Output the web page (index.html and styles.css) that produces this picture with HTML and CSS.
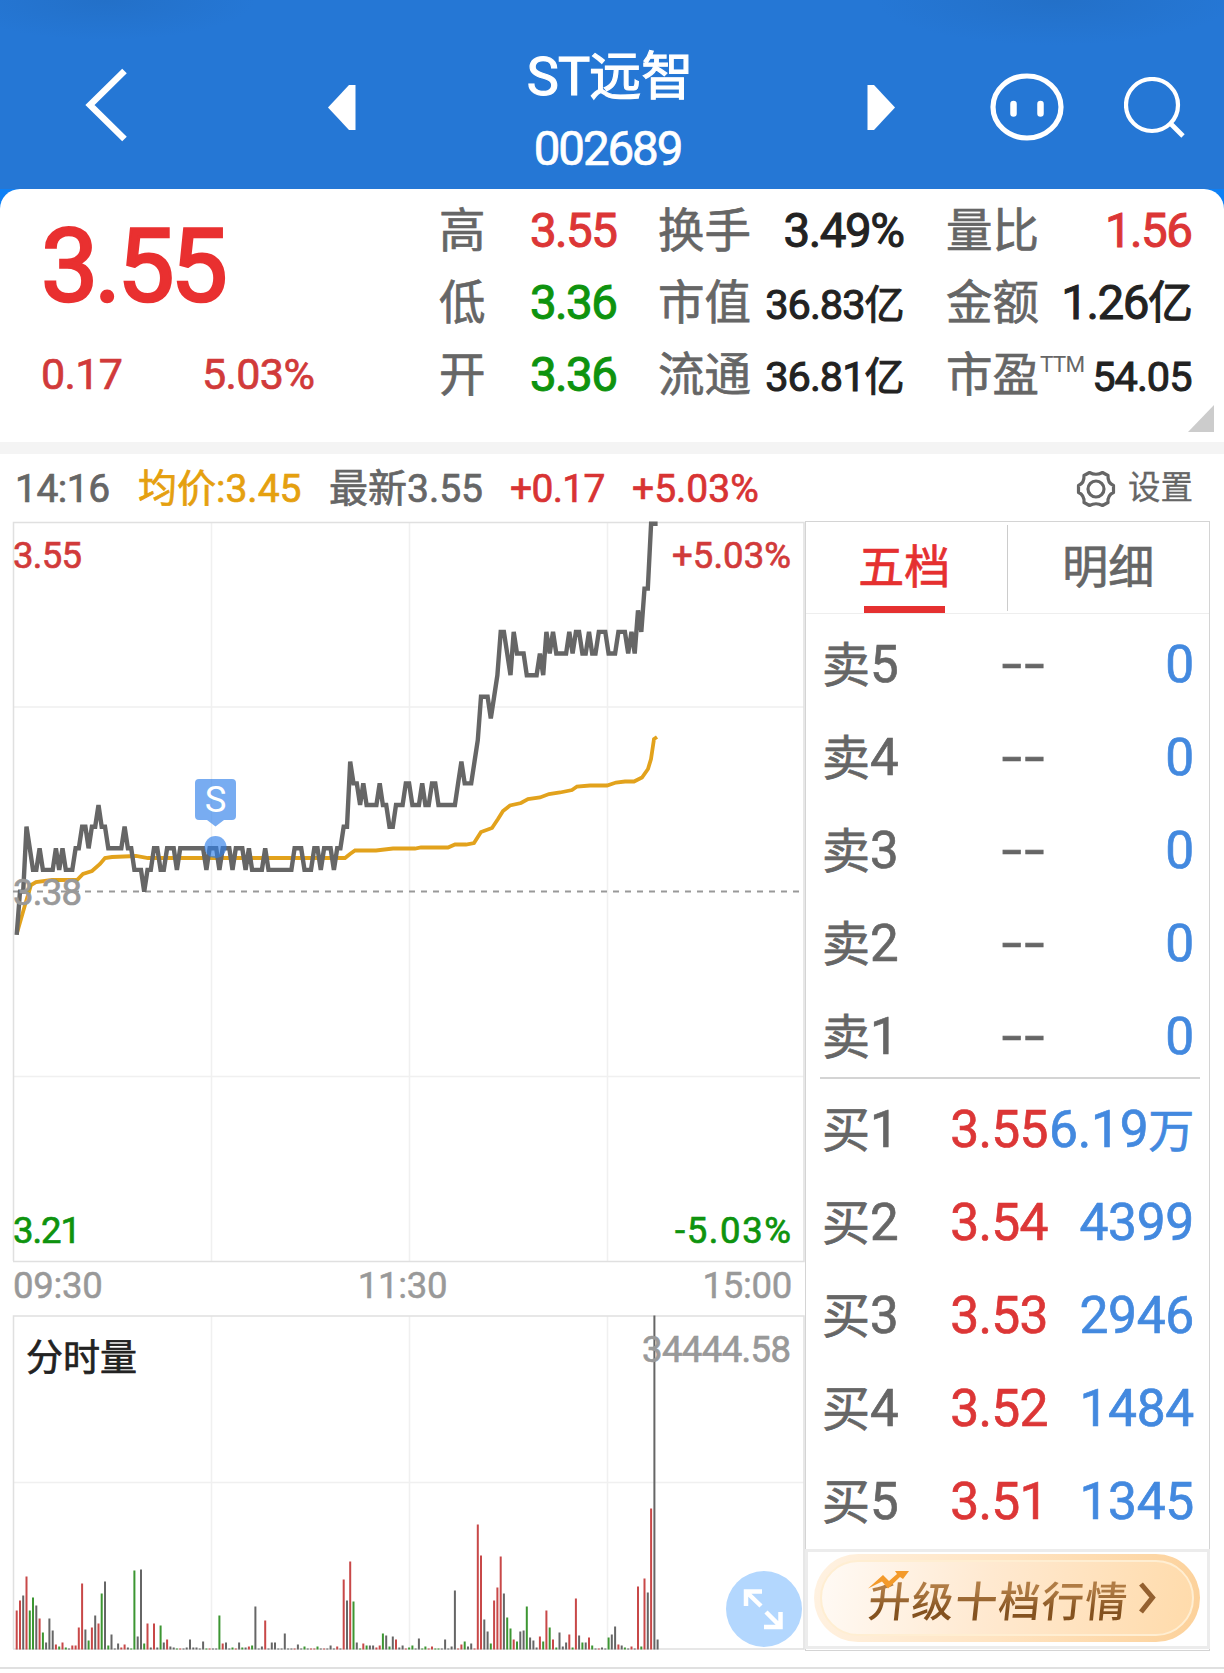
FILE: index.html
```html
<!DOCTYPE html>
<html lang="zh-CN">
<head>
    <meta charset="UTF-8">
    <meta name="viewport" content="width=device-width, initial-scale=1.0">
    <title>ST远智 002689</title>
    <link rel="stylesheet" href="styles.css">
</head>
<body>

<!-- 顶部导航 -->
<div class="header">
    <svg class="back" width="42" height="74" viewBox="0 0 42 74"><path d="M39.500 3L5 37L39.500 71" fill="none" stroke="#fff" stroke-width="6.500"/></svg>
    <svg class="prev" width="28" height="45" viewBox="0 0 28 45"><path d="M0 22.500L21 0H27.500V45H21Z" fill="#fff"/></svg>
    <div class="title">
        <div class="name"><span>ST</span>远智</div>
        <div class="code">002689</div>
    </div>
    <svg class="next" width="28" height="45" viewBox="0 0 28 45"><path d="M28 22.500L7 0H.5V45H7Z" fill="#fff"/></svg>
    <svg class="face" width="76" height="70" viewBox="0 0 76 70">
        <ellipse cx="38" cy="35" rx="34" ry="31" fill="none" stroke="#fff" stroke-width="5.200"/>
        <path d="M24.500 32V41.500M51.500 32V41.500" stroke="#fff" stroke-width="6.500" stroke-linecap="round"/>
    </svg>
    <svg class="search" width="62" height="62" viewBox="0 0 62 62">
        <ellipse cx="28" cy="28" rx="26" ry="26" fill="none" stroke="#fff" stroke-width="4.200"/>
        <path d="M46 46L59 59" stroke="#fff" stroke-width="4.800"/>
    </svg>
</div>

<!-- 行情概览 -->
<div class="card-bg">
<div class="card">
    <div class="price">
        <div class="last">3.55</div>
        <div class="change"><span>0.17</span><span>5.03%</span></div>
    </div>
    <div class="stats col-1">
        <div class="stat"><span>高</span><b class="red">3.55</b></div>
        <div class="stat"><span>低</span><b class="green">3.36</b></div>
        <div class="stat"><span>开</span><b class="green">3.36</b></div>
    </div>
    <div class="stats col-2">
        <div class="stat"><span>换手</span><b>3.49%</b></div>
        <div class="stat"><span>市值</span><b class="small">36.83<i>亿</i></b></div>
        <div class="stat"><span>流通</span><b class="small">36.81<i>亿</i></b></div>
    </div>
    <div class="stats col-3">
        <div class="stat"><span>量比</span><b class="red">1.56</b></div>
        <div class="stat"><span>金额</span><b>1.26<i>亿</i></b></div>
        <div class="stat"><span>市盈<em>TTM</em></span><b class="small">54.05</b></div>
    </div>
    <div class="corner"></div>
</div>
</div>

<div class="info">
    <span class="time">14:16</span>
    <span class="avg">均价:3.45</span>
    <span class="latest">最新3.55</span>
    <span class="up">+0.17</span>
    <span class="pct">+5.03%</span>
    <div class="settings">
        <svg width="42" height="40" viewBox="0 0 42 40">
            <path d="M14.500 3.500Q21 7 27.500 3.500L33 6.500Q32.500 14 38.500 16.500V23.500Q32.500 26 33 33.500L27.500 36.500Q21 33 14.500 36.500L9 33.500Q9.500 26 3.500 23.500V16.500Q9.500 14 9 6.500Z" fill="none" stroke="#666" stroke-width="3.200" stroke-linejoin="round"/>
            <ellipse cx="21" cy="20" rx="8" ry="8" fill="none" stroke="#666" stroke-width="3.200"/>
        </svg>
        设置
    </div>
</div>

<div class="main">
    <div class="charts">
        <!-- 分时走势 -->
        <svg class="price-chart" width="805" height="743" viewBox="0 521 805 743">
            <path class="grid" d="M211.500 523V1261M409.500 523V1261M607.500 523V1261M13 707H804M13 1076.500H804"/>
            <path class="frame" d="M13.500 1261V522.500H804V1261.500H13"/>
            <path d="M13 891.500H804" stroke="#999" stroke-width="1.800" stroke-dasharray="6 6"/>
            <polyline id="avgLine" class="avg-line" points="16.7,934 25,905 31,885 36,882 52,880 77,880 83,874 92,871 100,864 105,858 112,857 136,856 148,858 345,858 350,854 355,850.5 376,850.5 393,848.5 415,848.5 421,847.5 448,847.5 455,844.5 466,844.5 474,843 481,832 492,828 498,819 503,811 510,805.5 521,803 528,799 540,797.5 549,794 560,792.5 572,790 577,786.5 590,785.5 607,785.5 616,782.5 625,781.5 634,781.5 642,777.5 648,769 651,759 654,739 657,737"/>
            <polyline id="priceLine" class="price-line"/>
            <g class="sell-mark">
                <path d="M199 779H232Q236 779 236 783V816Q236 820 232 820H224L215.500 826.500L207 820H199Q195 820 195 816V783Q195 779 199 779Z"/>
                <circle cx="215.500" cy="847" r="11"/>
                <text x="215.500" y="811.500" text-anchor="middle">S</text>
            </g>
            <text class="red" x="13" y="568" textLength="69">3.55</text>
            <text class="red" x="791" y="568" text-anchor="end" textLength="119">+5.03%</text>
            <text class="gray" x="13" y="905" textLength="69">3.38</text>
            <text class="green" x="13" y="1243" textLength="68">3.21</text>
            <text class="green" x="791" y="1243" text-anchor="end" textLength="116">-5.03%</text>
        </svg>
        <div class="axis"><span>09:30</span><span>11:30</span><span>15:00</span></div>
        <!-- 分时量 -->
        <div class="volume">
            <svg width="805" height="336" viewBox="0 1315 805 336">
                <path class="grid" d="M211.500 1316V1649M409.500 1316V1649M607.500 1316V1649M13 1482.500H804"/>
                <path class="frame" d="M13.500 1649V1316H804V1649H13"/>
                <g id="bars"></g>
                <text class="vol-name" x="26" y="1371">分时量</text>
                <text class="gray" x="791" y="1361.500" text-anchor="end" textLength="149">34444.58</text>
            </svg>
            <div class="expand">
                <svg width="76" height="76" viewBox="0 0 76 76"><path d="M20 35V20.500H36M20 20.500L35 35M40 41L55 56M38 56H54.500V41" fill="none" stroke="#fff" stroke-width="4.500"/></svg>
            </div>
        </div>
    </div>

    <!-- 五档盘口 -->
    <div class="book">
        <div class="tabs">
            <div class="tab active">五档</div>
            <div class="tab">明细</div>
        </div>
        <div class="rows">
            <div class="row"><span>卖<i>5</i></span><b class="none">--</b><b class="vol">0</b></div>
            <div class="row"><span>卖<i>4</i></span><b class="none">--</b><b class="vol">0</b></div>
            <div class="row"><span>卖<i>3</i></span><b class="none">--</b><b class="vol">0</b></div>
            <div class="row"><span>卖<i>2</i></span><b class="none">--</b><b class="vol">0</b></div>
            <div class="row"><span>卖<i>1</i></span><b class="none">--</b><b class="vol">0</b></div>
            <div class="line"></div>
            <div class="row"><span>买<i>1</i></span><b class="red">3.55</b><b class="vol">6.19<u>万</u></b></div>
            <div class="row"><span>买<i>2</i></span><b class="red">3.54</b><b class="vol">4399</b></div>
            <div class="row"><span>买<i>3</i></span><b class="red">3.53</b><b class="vol">2946</b></div>
            <div class="row"><span>买<i>4</i></span><b class="red">3.52</b><b class="vol">1484</b></div>
            <div class="row"><span>买<i>5</i></span><b class="red">3.51</b><b class="vol">1345</b></div>
        </div>
        <div class="banner">
            <div class="pill">
                <span>升级十档行情</span>
                <svg class="chevron" width="20" height="32" viewBox="0 0 20 32"><path d="M3 2L14.500 15.500L3 30" fill="none" stroke="#94602f" stroke-width="5"/></svg>
                <svg class="trend" width="42" height="20" viewBox="0 0 42 20"><path d="M0 18.500L15 5L21 11L29 4L27 1H41L35 9L32 7L20 18.500L14 11.500Z" fill="#f39a2b"/></svg>
            </div>
        </div>
    </div>
</div>
<div class="bottom-line"></div>

<script src="chart.js"></script>
</body>
</html>
```
FILE: styles.css
```css
* {
    box-sizing: border-box;
}
body {
    margin: 0;
    background-color: #fff;
    font-family: Roboto, "Noto Sans CJK SC", sans-serif;
    font-weight: 400;
    -webkit-text-stroke: 0.7px;
    color: #222;
    overflow: hidden;
}
b, i, em, u {
    font-weight: inherit;
    font-style: normal;
    text-decoration: none;
}
svg {
    display: block;
}
.red {
    color: #dc3636;
    fill: #d13a3a;
}
.green {
    color: #0e930e;
    fill: #0e930e;
}
.gray {
    fill: #999;
}

/* 顶部 */
.header {
    height: 189px;
    display: flex;
    align-items: flex-start;
    color: #fff;
    background: radial-gradient(ellipse 150px 40px at 105px 0, #2370c8, transparent),
        radial-gradient(ellipse 180px 45px at 1055px 0, #2370c8, transparent), #2577d5;
}
.back {
    margin: 68px 0 0 85px;
}
.prev {
    margin: 85px 0 0 201px;
}
.title {
    width: 300px;
    margin: 45px 0 0 104px;
    text-align: center;
}
.name {
    font-size: 52px;
    line-height: 64px;
    height: 64px;
    -webkit-text-stroke-width: 1.1px;
}
.name span {
    font-size: 54px;
    letter-spacing: -1px;
}
.code {
    margin-top: 10px;
    font-size: 47.5px;
    line-height: 60px;
    letter-spacing: -2.1px;
    padding-right: 5px;
}
.next {
    margin: 85px 0 0 107px;
}
.face {
    margin: 72px 0 0 94px;
}
.search {
    margin: 77px 0 0 59px;
}

/* 概览卡片 */
.card-bg {
    background-color: #0e80f5;
}
.card {
    position: relative;
    display: flex;
    height: 253px;
    padding-top: 5px;
    background-color: #fff;
    border-radius: 20px 20px 0 0;
}
.price {
    width: 396px;
    padding-left: 41px;
    color: #e93030;
}
.last {
    margin-top: 14px;
    font-size: 102px;
    line-height: 116px;
    letter-spacing: -4px;
    -webkit-text-stroke-width: 2.6px;
}
.change {
    display: flex;
    gap: 80px;
    margin-top: 24px;
    font-size: 43px;
    line-height: 52px;
    letter-spacing: -0.6px;
    color: #d13a3a;
}
.change span:first-child {
    width: 81px;
}
.stats {
    display: flex;
    flex-direction: column;
}
.col-1 {
    width: 179px;
    margin-left: 43px;
}
.col-2 {
    width: 247px;
    margin-left: 40px;
}
.col-3 {
    width: 247px;
    margin-left: 41px;
}
.stat {
    display: flex;
    justify-content: space-between;
    height: 72px;
    line-height: 74px;
    font-size: 46.5px;
    white-space: nowrap;
}
.stat span {
    color: #666;
}
.stat b {
    font-size: 47.5px;
    letter-spacing: -1.5px;
    padding-right: 1.5px;
    -webkit-text-stroke-width: 1px;
}
.stat b.small {
    font-size: 41.5px;
    letter-spacing: -1px;
    padding-top: 2px;
}
.stat i {
    font-size: 45px;
}
.stat .small i {
    font-size: 40px;
}
.stat em {
    font-size: 22.5px;
    vertical-align: 19px;
    line-height: 1;
    margin-left: 1px;
    letter-spacing: -0.8px;
    -webkit-text-stroke-width: 0;
}
.corner {
    position: absolute;
    right: 10px;
    bottom: 10px;
    border-left: 26px solid transparent;
    border-bottom: 27px solid #ccc;
}

/* 分时信息栏 */
.info {
    display: flex;
    height: 79px;
    padding-top: 5px;
    border-top: 12px solid #f4f4f4;
    line-height: 61px;
    font-size: 39px;
    color: #d83333;
    white-space: nowrap;
}
.info span {
    flex: none;
}
.time {
    width: 121px;
    padding-left: 15px;
    color: #666;
    letter-spacing: -0.5px;
}
.avg {
    width: 208px;
    padding-left: 17px;
    color: #e5a00f;
}
.latest {
    width: 181px;
    color: #666;
}
.up {
    width: 122px;
    letter-spacing: -0.7px;
}
.settings {
    display: flex;
    align-items: center;
    gap: 11px;
    margin-left: auto;
    padding-right: 31px;
    height: 59px;
    font-size: 32.5px;
    color: #666;
    -webkit-text-stroke-width: 0.3px;
}

.main {
    display: flex;
}
.charts {
    width: 805px;
}
.charts text {
    font-size: 36.5px;
    stroke-width: 0.7px;
}
text.red {
    stroke: #d13a3a;
}
text.green {
    stroke: #0e930e;
}
text.gray {
    stroke: #999;
}
.grid {
    fill: none;
    stroke: #f0f0f0;
    stroke-width: 1.5;
}
.frame {
    fill: none;
    stroke: #e0e0e0;
    stroke-width: 1.5;
}
.price-line {
    fill: none;
    stroke: #666;
    stroke-width: 4.4;
}
.avg-line {
    fill: none;
    stroke: #e2a21c;
    stroke-width: 3.8;
}
.sell-mark {
    fill: #2f80ea;
    fill-opacity: 0.65;
}
.sell-mark text {
    fill: #fff;
    fill-opacity: 1;
}
.axis {
    display: flex;
    justify-content: space-between;
    height: 51px;
    padding: 0 13px;
    line-height: 43px;
    font-size: 36.5px;
    letter-spacing: -0.3px;
    -webkit-text-stroke-width: 0.5px;
    color: #999;
}
.axis span:nth-child(2) {
    margin-right: 0;
}
.volume {
    position: relative;
}
.charts .vol-name {
    font-size: 37px;
    fill: #222;
    stroke: #222;
}
.expand {
    position: absolute;
    left: 726px;
    top: 256px;
    width: 76px;
    height: 76px;
    border-radius: 50%;
    background-color: #b3d7fe;
}

/* 盘口 */
.book {
    width: 405px;
    height: 1130px;
    border: 1px solid #d4d4d4;
}
.tabs {
    display: flex;
    height: 92px;
    border-bottom: 1px solid #eee;
}
.tab {
    width: 50%;
    height: 86px;
    margin-top: 3px;
    padding-top: 3px;
    line-height: 78px;
    font-size: 46px;
    text-align: center;
    color: #666;
}
.tab.active {
    color: #e53030;
    border-right: 1px solid #ccc;
    padding-right: 4px;
}
.tab.active::after {
    content: "";
    display: block;
    width: 81px;
    height: 7px;
    margin: 0 auto;
    background-color: #e53030;
}
.rows {
    height: 935px;
    padding: 4px 15px 0 16px;
}
.row {
    display: flex;
    height: 93px;
    line-height: 93px;
    font-size: 48px;
    white-space: nowrap;
}
.row span {
    width: 96px;
    color: #666;
}
.row i {
    font-size: 51px;
}
.row b {
    width: 131px;
    font-size: 51.5px;
    text-align: right;
}
.row b.red {
    letter-spacing: -0.7px;
}
.row .none {
    color: #666;
    letter-spacing: 2px;
    transform: scaleX(1.4);
    transform-origin: right;
}
.row b.vol {
    width: 147px;
    color: #4389df;
    letter-spacing: -0.3px;
}
.row u {
    font-size: 46px;
}
.line {
    height: 2px;
    margin: -6px -6px 4px -2px;
    background-color: #d4d4d4;
}
.banner {
    height: 100px;
    padding: 2px 7px 3px 6px;
    border: 3px solid #ececec;
    margin: 0 -1px;
}
.pill {
    position: relative;
    display: flex;
    align-items: center;
    height: 88px;
    padding-left: 55px;
    border-radius: 44px;
    background: linear-gradient(100deg, #fff2e2, #ffe3c0 50%, #fcd19a);
}
.pill::before {
    content: "";
    position: absolute;
    left: 6px;
    right: 6px;
    top: 6px;
    bottom: 6px;
    border: 2px solid #ffeed2;
    border-radius: 40px;
    background: linear-gradient(100deg, #fffaf5, #ffe9d0 45%, #ffdbab);
}
.pill span {
    position: relative;
    font-size: 42px;
    font-weight: 500;
    letter-spacing: 1.3px;
    transform: skewX(-6deg);
    background: linear-gradient(#b07c45 35%, #84521f 70%);
    -webkit-background-clip: text;
    color: transparent;
    -webkit-text-stroke-width: 0;
}
.chevron {
    position: relative;
    margin-left: 9px;
}
.trend {
    position: absolute;
    left: 54px;
    top: 16px;
}
.bottom-line {
    height: 2px;
    margin-top: 16px;
    background-color: #e0e0e0;
}
```
FILE: chart.js
```js
// 每分钟价格（分，去掉 3.00）
var prices = [
    36, 38, 38, 41, 40, 39, 39, 40, 39, 39, 39, 39, 40, 39, 40, 39, 39, 39, 40, 40,
    41, 41, 40, 41, 41, 42, 41, 41, 40, 40, 40, 40, 40, 41, 40, 40, 39, 39, 39, 38,
    39, 39, 40, 40, 39, 39, 40, 40, 40, 39, 40, 40, 40, 40, 40, 40, 40, 40, 39, 40,
    40, 40, 39, 40, 40, 40, 39, 40, 40, 40, 39, 40, 39, 39, 39, 39, 40, 39, 39, 39,
    39, 39, 39, 39, 39, 40, 40, 40, 39, 39, 39, 40, 40, 39, 40, 40, 40, 39, 40, 40,
    41, 41, 44, 43, 43, 42, 43, 42, 42, 42, 42, 43, 42, 42, 41, 41, 42, 42, 42, 43,
    43, 42, 42, 42, 43, 42, 42, 43, 43, 42, 42, 42, 42, 42, 42, 43, 44, 43, 43, 43,
    44, 45, 47, 47, 47, 46, 47, 48, 50, 50, 49, 48, 50, 49, 49, 49, 48, 48, 48, 48,
    49, 48, 50, 49, 50, 49, 49, 49, 49, 50, 49, 50, 50, 49, 49, 50, 49, 49, 50, 50,
    50, 49, 49, 49, 50, 50, 50, 49, 50, 49, 51, 50, 52, 52, 55, 55, 55
];

// 成交量：颜色 + 高度
var volumes = 'r39 r49 k54 r73 g39 g52 k44 r31 g17 k7 k31 k19 r5 g3 r7 g2 k1 r4 r4 r22 ' +
    'r66 k20 g9 r22 k34 r26 g56 k68 g4 k15 k1 k6 r2 r5 k2 g1 g79 k13 k80 g6 ' +
    'r26 k2 r26 k2 g24 k7 r10 k3 k2 g1 r1 k1 k2 k10 k2 k2 k1 k8 g1 r1 ' +
    'k1 k1 g34 r6 k7 k1 g2 r1 k7 g2 k2 r3 g4 k43 k1 k3 r29 k1 k7 k7 ' +
    'k1 k1 k16 k1 k1 r1 k5 k1 g3 k1 r1 r1 g3 k1 r1 k1 k4 k1 r3 k1 ' +
    'r70 k49 r88 g48 k7 g1 r6 g4 k4 k4 r2 r4 g16 k14 g3 k13 r10 k2 k4 r1 ' +
    'g2 g4 k1 k11 g1 g3 r1 r3 g1 g1 k1 k10 k1 k3 k59 r1 r5 g8 k3 k6 ' +
    'r1 r125 r94 k30 k18 g6 r49 r62 r93 k56 g32 g21 r10 g8 k18 k19 g43 k12 k9 k2 ' +
    'r13 g8 r39 g22 r10 g2 k17 k3 k7 r15 g2 r51 k14 g7 k7 r12 g4 k1 r1 k2 ' +
    'k1 g12 k15 k23 r5 k4 g2 k1 r3 k1 r63 g3 r71 k57 r141 k334 k10';

var colors = { r: '#c84848', g: '#3c9632', k: '#666' };
var left = 16.7;
var step = 3.27;

document.getElementById('priceLine').setAttribute('points', prices.map(function (p, i) {
    return (left + i * step).toFixed(1) + ',' + (523.7 + (55 - p) * 21.64).toFixed(1);
}).join(' '));

document.getElementById('bars').innerHTML = volumes.split(' ').map(function (v, i) {
    var h = Number(v.slice(1));
    return '<rect x="' + (left + i * step - 1).toFixed(1) + '" y="' + (1649.5 - h) +
        '" width="2" height="' + h + '" fill="' + colors[v[0]] + '"/>';
}).join('');
```
